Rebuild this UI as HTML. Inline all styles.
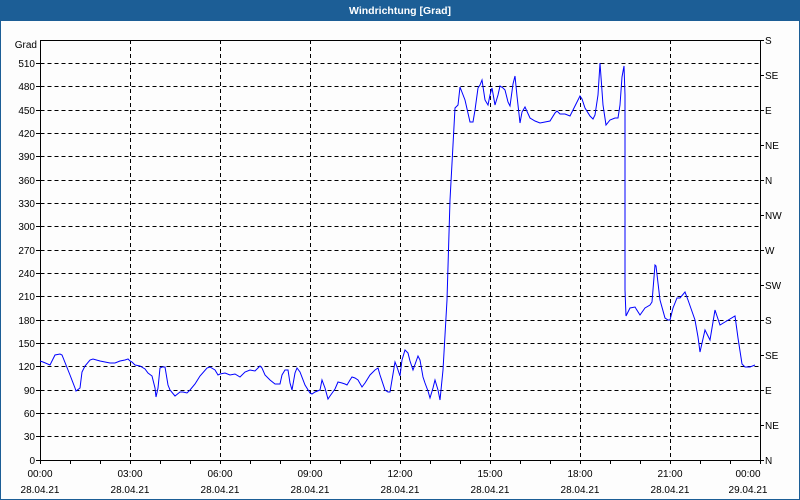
<!DOCTYPE html>
<html><head><meta charset="utf-8"><style>
html,body{margin:0;padding:0;width:800px;height:500px;overflow:hidden;background:#fff}
svg{display:block;font-family:"Liberation Sans","DejaVu Sans",sans-serif;font-size:10px}
</style></head><body>
<svg width="800" height="500" viewBox="0 0 800 500" xmlns="http://www.w3.org/2000/svg">
<rect x="0" y="0" width="800" height="500" fill="#1c5e96"/>
<rect x="1" y="21" width="798" height="478" fill="#fdfdfd"/>
<text x="400" y="14" fill="#fff" font-weight="bold" font-size="10.5" text-anchor="middle">Windrichtung [Grad]</text>
<g stroke="#000" stroke-width="1" stroke-dasharray="4,3" fill="none">
<path d="M40.5 63.5H760M40.5 86.5H760M40.5 110.5H760M40.5 133.5H760M40.5 156.5H760M40.5 180.5H760M40.5 203.5H760M40.5 226.5H760M40.5 250.5H760M40.5 273.5H760M40.5 296.5H760M40.5 320.5H760M40.5 343.5H760M40.5 366.5H760M40.5 390.5H760M40.5 413.5H760M40.5 436.5H760"/>
<path d="M130.5 40V460M220.5 40V460M310.5 40V460M400.5 40V460M490.5 40V460M580.5 40V460M670.5 40V460"/>
</g>
<rect x="40.5" y="40.5" width="720" height="420" fill="none" stroke="#000"/>
<g stroke="#000" fill="none">
<path d="M36 63.5H40M36 86.5H40M36 110.5H40M36 133.5H40M36 156.5H40M36 180.5H40M36 203.5H40M36 226.5H40M36 250.5H40M36 273.5H40M36 296.5H40M36 320.5H40M36 343.5H40M36 366.5H40M36 390.5H40M36 413.5H40M36 436.5H40M36 460.5H40"/>
<path d="M760 40.5H764M760 75.5H764M760 110.5H764M760 145.5H764M760 180.5H764M760 215.5H764M760 250.5H764M760 285.5H764M760 320.5H764M760 355.5H764M760 390.5H764M760 425.5H764M760 460.5H764"/>
<path d="M40.5 460V464M70.5 460V464M100.5 460V464M130.5 460V464M160.5 460V464M190.5 460V464M220.5 460V464M250.5 460V464M280.5 460V464M310.5 460V464M340.5 460V464M370.5 460V464M400.5 460V464M430.5 460V464M460.5 460V464M490.5 460V464M520.5 460V464M550.5 460V464M580.5 460V464M610.5 460V464M640.5 460V464M670.5 460V464M700.5 460V464M730.5 460V464M760.5 460V464"/>
</g>
<g fill="#000" text-anchor="end">
<text x="37" y="48">Grad</text>
<text x="35" y="67">510</text><text x="35" y="90">480</text><text x="35" y="114">450</text><text x="35" y="137">420</text><text x="35" y="160">390</text><text x="35" y="184">360</text><text x="35" y="207">330</text><text x="35" y="230">300</text><text x="35" y="254">270</text><text x="35" y="277">240</text><text x="35" y="300">210</text><text x="35" y="324">180</text><text x="35" y="347">150</text><text x="35" y="370">120</text><text x="35" y="394">90</text><text x="35" y="417">60</text><text x="35" y="440">30</text><text x="35" y="464">0</text>
</g>
<g fill="#000">
<text x="765" y="44">S</text><text x="765" y="79">SE</text><text x="765" y="114">E</text><text x="765" y="149">NE</text><text x="765" y="184">N</text><text x="765" y="219">NW</text><text x="765" y="254">W</text><text x="765" y="289">SW</text><text x="765" y="324">S</text><text x="765" y="359">SE</text><text x="765" y="394">E</text><text x="765" y="429">NE</text><text x="765" y="464">N</text>
</g>
<g fill="#000" text-anchor="middle">
<text x="40" y="477">00:00</text><text x="130" y="477">03:00</text><text x="220" y="477">06:00</text><text x="310" y="477">09:00</text><text x="400" y="477">12:00</text><text x="490" y="477">15:00</text><text x="580" y="477">18:00</text><text x="670" y="477">21:00</text><text x="748" y="477">00:00</text>
<text x="40" y="493">28.04.21</text><text x="130" y="493">28.04.21</text><text x="220" y="493">28.04.21</text><text x="310" y="493">28.04.21</text><text x="400" y="493">28.04.21</text><text x="490" y="493">28.04.21</text><text x="580" y="493">28.04.21</text><text x="670" y="493">28.04.21</text><text x="748" y="493">29.04.21</text>
</g>
<polyline fill="none" stroke="#0000ff" stroke-width="1" points="40,361 43,362 50,365 55,355 60,354 62,355 70,375 75,388 76,391 80,388 82,372 85,366 90,360 93,359 100,361 110,363 115,363 120,361 125,360 128,359 130,361 132,362 135,365 140,366 145,369 148,373 152,376 155,388 156,397 158,388 160,368 162,367 165,367 168,385 170,390 175,396 180,392 183,392 187,393 190,390 195,384 200,376 207,368 210,367 215,370 218,375 220,374 225,373 230,375 235,374 240,377 245,372 250,370 255,371 260,366 262,368 265,375 270,380 275,384 280,384 282,375 285,370 288,370 290,383 292,390 295,373 297,368 300,372 305,385 310,393 312,394 315,392 320,390 322,380 325,388 328,399 330,396 335,389 338,382 342,383 345,384 347,385 350,380 352,377 355,378 358,380 362,387 365,383 370,375 375,370 378,368 380,375 385,390 388,392 390,392 392,380 395,362 397,367 400,376 402,360 405,350 408,353 410,361 413,370 418,356 420,360 423,377 425,383 428,391 430,398 433,388 435,380 438,390 440,400 443,370 447,300 450,200 453,145 455,108 458,105 460,87 465,100 470,122 473,122 475,110 478,88 480,85 482,80 485,100 488,105 490,95 492,88 495,105 498,95 500,86 503,88 505,90 508,102 510,106 513,84 515,76 517,96 520,123 522,112 525,107 530,118 535,121 540,123 545,122 550,121 555,113 557,111 560,114 565,114 570,116 575,106 580,96 582,99 585,108 590,116 593,119 595,115 598,95 600,63 603,105 606,125 610,120 615,118 618,118 620,105 622,77 624,66 625,95 625,250 625,290 626,316 630,308 635,307 640,315 645,308 650,305 652,302 655,265 656,266 660,300 665,318 668,320 670,320 673,308 677,298 680,298 685,292 688,300 695,320 698,337 700,352 705,330 710,340 715,310 720,325 725,322 735,316 738,338 742,364 745,367 750,367 755,365"/>
</svg>
</body></html>
